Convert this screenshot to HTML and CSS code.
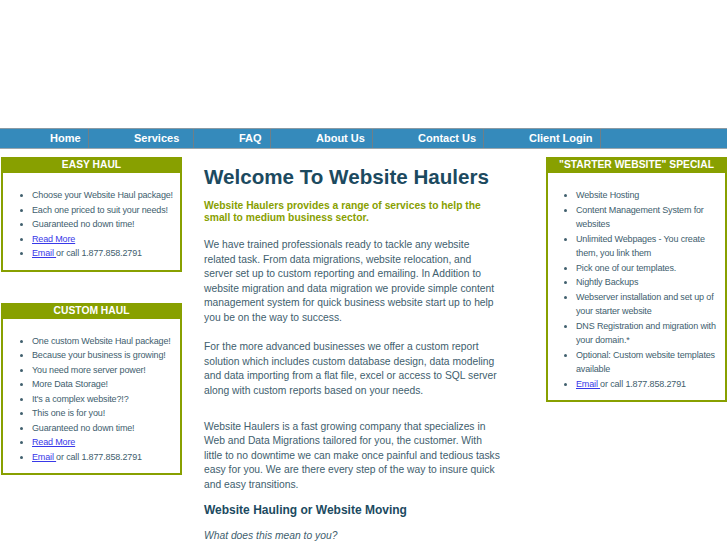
FILE: index.html
```html
<!DOCTYPE html>
<html>
<head>
<meta charset="utf-8">
<title>Website Haulers</title>
<link rel="stylesheet" href="styles.css">
</head>
<body>
<div class="header"></div>
<nav class="nav">
  <a class="nav-item first" href="#">Home</a>
  <a class="nav-item w-services" href="#">Services</a>
  <a class="nav-item w-faq" href="#">FAQ</a>
  <a class="nav-item w-about" href="#">About Us</a>
  <a class="nav-item w-contact" href="#">Contact Us</a>
  <a class="nav-item w-login" href="#">Client Login</a>
</nav>
<div class="main">
  <aside class="side left">
    <div class="box">
      <div class="box-title">EASY HAUL</div>
      <ul class="box-list">
        <li>Choose your Website Haul package!</li>
        <li>Each one priced to suit your needs!</li>
        <li>Guaranteed no down time!</li>
        <li><a href="#">Read More</a></li>
        <li><a href="#">Email </a>or call 1.877.858.2791</li>
      </ul>
    </div>
    <div class="box second">
      <div class="box-title">CUSTOM HAUL</div>
      <ul class="box-list">
        <li>One custom Website Haul package!</li>
        <li>Because your business is growing!</li>
        <li>You need more server power!</li>
        <li>More Data Storage!</li>
        <li>It's a complex website?!?</li>
        <li>This one is for you!</li>
        <li>Guaranteed no down time!</li>
        <li><a href="#">Read More</a></li>
        <li><a href="#">Email </a>or call 1.877.858.2791</li>
      </ul>
    </div>
  </aside>
  <main class="content">
    <h1>Welcome To Website Haulers</h1>
    <p class="lead">Website Haulers provides a range of services to help the small to medium business sector.</p>
    <p>We have trained professionals ready to tackle any website related task. From data migrations, website relocation, and server set up to custom reporting and emailing. In Addition to website migration and data migration we provide simple content management system for quick business website start up to help you be on the way to success.</p>
    <p>For the more advanced businesses we offer a custom report solution which includes custom database design, data modeling and data importing from a flat file, excel or access to SQL server along with custom reports based on your needs.</p>
    <p class="spaced">Website Haulers is a fast growing company that specializes in Web and Data Migrations tailored for you, the customer. With little to no downtime we can make once painful and tedious tasks easy for you. We are there every step of the way to insure quick and easy transitions.</p>
    <h2>Website Hauling or Website Moving</h2>
    <p class="q">What does this mean to you?</p>
  </main>
  <aside class="side right">
    <div class="box">
      <div class="box-title">"STARTER WEBSITE" SPECIAL</div>
      <ul class="box-list">
        <li>Website Hosting</li>
        <li>Content Management System for websites</li>
        <li>Unlimited Webpages - You create them, you link them</li>
        <li>Pick one of our templates.</li>
        <li>Nightly Backups</li>
        <li>Webserver installation and set up of your starter website</li>
        <li>DNS Registration and migration with your domain.*</li>
        <li>Optional: Custom website templates available</li>
        <li><a href="#">Email </a>or call 1.877.858.2791</li>
      </ul>
    </div>
  </aside>
</div>
</body>
</html>
```

FILE: styles.css
```css
html, body {
  margin: 0;
  padding: 0;
  background: #ffffff;
  font-family: "Liberation Sans", Arial, sans-serif;
  color: #41606e;
}

.header {
  height: 128px;
}

.nav {
  display: flex;
  height: 19px;
  background: #358abb;
  border-top: 1px solid #8a9aa4;
  border-bottom: 1px solid #9aa6ad;
}

.nav-item {
  display: block;
  box-sizing: border-box;
  padding-left: 45px;
  border-right: 1px solid #6f7f88;
  color: #ffffff;
  font-weight: bold;
  font-size: 11px;
  line-height: 19px;
  text-decoration: none;
}

.nav-item.first { width: 89px; padding-left: 50px; }
.w-services { width: 105px; }
.w-faq { width: 77px; }
.w-about { width: 102px; }
.w-contact { width: 111px; }
.w-login { width: 117px; }

.main {
  display: flex;
  align-items: flex-start;
  padding-top: 8px;
}

.side {
  width: 181px;
  flex: none;
}

.side.left {
  margin-left: 1px;
}

.side.right {
  margin-left: 2px;
}

.box {
  box-sizing: border-box;
  border: 2px solid #88a000;
  border-top: 0;
  background: #ffffff;
}

.box.second {
  margin-top: 31px;
}

.box-title {
  background: #88a000;
  color: #ffffff;
  font-weight: bold;
  font-size: 10.3px;
  line-height: 16px;
  text-align: center;
}

.box-list {
  margin: 15px 0 9px 0;
  padding-left: 29px;
  font-size: 9px;
  letter-spacing: -0.15px;
  line-height: 14.5px;
  color: #41606e;
}

.box-list a {
  color: #3838e8;
}

.right .box-list {
  padding-left: 28px;
  padding-right: 0;
}

.content {
  width: 297px;
  flex: none;
  margin-left: 22px;
  margin-right: 43px;
  font-size: 10.3px;
  line-height: 14.6px;
}

.content h1 {
  margin: 8px 0 11px 0;
  font-size: 20.6px;
  line-height: 24px;
  white-space: nowrap;
  color: #1c4a5f;
}

.content p {
  margin: 0 0 14.6px 0;
}

.content .lead {
  color: #88a000;
  font-weight: bold;
  line-height: 12px;
  margin-bottom: 14px;
}

.content .spaced {
  margin-top: 21px;
}

.content h2 {
  margin: -6px 0 10px 0;
  font-size: 12px;
  line-height: 18px;
  color: #1c4a5f;
}

.content .q {
  font-style: italic;
}
```
